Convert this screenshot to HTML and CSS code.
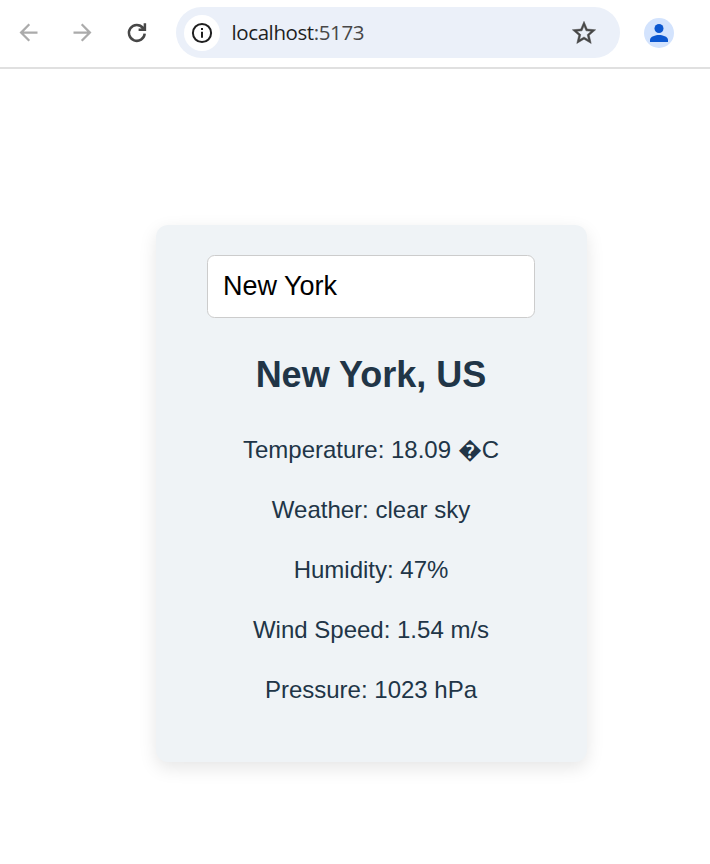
FILE: index.html
```html
<!DOCTYPE html>
<html lang="en">
<head>
<meta charset="utf-8">
<title>Weather</title>
<link rel="stylesheet" href="styles.css">
</head>
<body>
<header class="toolbar">
  <nav class="nav">
    <svg class="icon muted" viewBox="0 0 24 24"><path d="M20 11H7.83l5.59-5.59L12 4l-8 8 8 8 1.41-1.41L7.83 13H20z"/></svg>
    <svg class="icon muted" viewBox="0 0 24 24"><path d="M12 4l-1.41 1.41L16.17 11H4v2h12.17l-5.58 5.59L12 20l8-8z"/></svg>
    <svg class="icon reload" viewBox="0 0 27 27"><path d="M20 9A7.9 7.9 0 1 0 21.7 14.6"/><path d="M21.9 4.3V10.8H15.6M18.4 7.6L21.4 10.3"/></svg>
  </nav>
  <div class="address">
    <span class="site-info">
      <svg class="info" viewBox="0 0 22 22"><circle cx="11" cy="11" r="9.1"/><path d="M11 9.7v6.1M11 6v2.1"/></svg>
    </span>
    <span class="url">localhost<span class="port">:5173</span></span>
    <svg class="star" viewBox="0 0 24 24"><path d="M22 9.24l-7.19-.62L12 2 9.19 8.63 2 9.24l5.46 4.73L5.82 21 12 17.27 18.18 21l-1.63-7.03L22 9.24zM12 15.4l-3.76 2.27 1-4.28-3.32-2.88 4.38-.38L12 6.1l1.71 4.04 4.38.38-3.32 2.88 1 4.28L12 15.4z"/></svg>
  </div>
  <span class="avatar">
    <svg class="person" viewBox="0 0 18 18"><circle cx="9" cy="4.5" r="4.5"/><path d="M0 18v-2.2C0 12.6 5.6 11 9 11s9 1.6 9 4.8V18z"/></svg>
  </span>
</header>
<main class="card">
  <input class="search" type="text" value="New York" aria-label="City">
  <h2 class="city">New York, US</h2>
  <p class="reading">Temperature: 18.09 &#xFFFD;C</p>
  <p class="reading">Weather: clear sky</p>
  <p class="reading">Humidity: 47%</p>
  <p class="reading">Wind Speed: 1.54 m/s</p>
  <p class="reading">Pressure: 1023 hPa</p>
</main>
</body>
</html>
```
FILE: styles.css
```css
* { box-sizing: border-box; }
body {
  margin: 0;
  min-height: 864px;
  background: #fff;
  color: #213547;
  font-family: "Liberation Sans", Arial, sans-serif;
}
.toolbar {
  display: flex;
  align-items: flex-start;
  height: 69px;
  padding: 7px 0 0 15px;
  border-bottom: 2px solid #e0e0e0;
}
.nav {
  display: flex;
  gap: 27px;
  width: 161px;
  padding-top: 12px;
}
.icon { width: 27px; height: 27px; fill: #474747; }
.muted { fill: #ababab; }
.reload { fill: none; stroke: #474747; stroke-width: 2.5; }
.address {
  display: flex;
  align-items: center;
  width: 444px;
  height: 51px;
  padding: 0 22px 0 7.5px;
  border-radius: 26px;
  background: #ebf0f9;
}
.site-info {
  display: flex;
  align-items: center;
  justify-content: center;
  width: 36px;
  height: 36px;
  border-radius: 50%;
  background: #fff;
}
.info { width: 22px; height: 22px; fill: none; stroke: #1f1f1f; stroke-width: 2; }
.url {
  flex: 1;
  margin-left: 12px;
  padding-bottom: 2px;
  color: #1f1f1f;
  font: 20.5px/30px "Open Sans", "Noto Sans", sans-serif;
  letter-spacing: -0.4px;
}
.port { color: #474747; }
.star {
  width: 28px;
  height: 28px;
  fill: #474747;
  stroke: #474747;
  stroke-width: 0.4;
}
.avatar {
  display: flex;
  align-items: center;
  justify-content: center;
  width: 30px;
  height: 30px;
  margin: 11px 0 0 24px;
  border-radius: 50%;
  background: #d3e3fd;
}
.person { width: 18px; height: 18px; fill: #0b57d0; }
.card {
  width: 431px;
  height: 537px;
  margin: 156px 0 0 155.5px;
  padding: 30px 0;
  border-radius: 12px;
  background: #eff3f6;
  box-shadow: 0 6px 18px rgba(0, 0, 0, 0.1);
  text-align: center;
}
.search {
  display: block;
  width: 328px;
  height: 63px;
  margin: 0 auto;
  padding: 0 15px;
  border: 1px solid #ccc;
  border-radius: 7.5px;
  background: #fff;
  color: #000;
  font: 27px "Liberation Sans", Arial, sans-serif;
}
.city {
  margin: 30px 0;
  font-size: 36px;
  line-height: 54px;
}
.reading {
  margin: 0 0 24px;
  font-size: 24px;
  line-height: 36px;
}
```
